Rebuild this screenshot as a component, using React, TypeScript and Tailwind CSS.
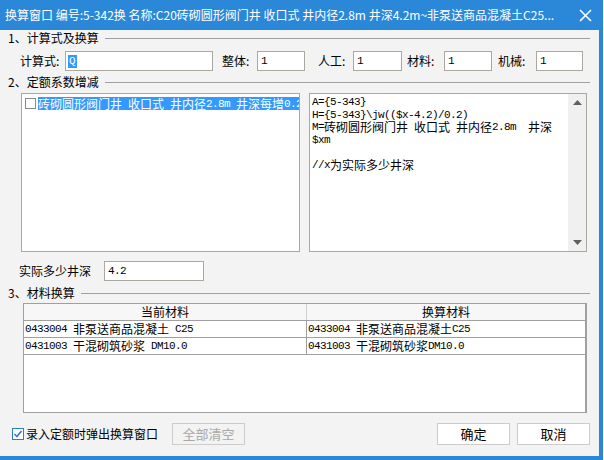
import React from 'react';

// SimSun-like text: ASCII runs in a narrow mono face, CJK at 12px
const Sim = ({ text }: { text: string }) => {
  const parts = text.match(/[\x00-\x7f]+|[^\x00-\x7f]+/g) ?? [];
  return (
    <>
      {parts.map((p, i) =>
        /^[\x00-\x7f]/.test(p) ? (
          <span key={i} className="font-['Liberation_Mono'] text-[11px] tracking-[-0.6px] leading-[12px] whitespace-pre">{p}</span>
        ) : (
          <span key={i} className="leading-[12px] whitespace-pre">{p}</span>
        )
      )}
    </>
  );
};

const SectionHeader = ({ label }: { label: string }) => (
  <div className="flex items-center h-[14px] pl-[8px] pr-[9px]">
    <span className="leading-[14px]">{label}</span>
    <div className="flex-1 ml-[6px] border-t border-[#a0a0a0]" />
  </div>
);

const Field = ({ value, width }: { value: string; width: string }) => (
  <div className={`${width} h-[20px] bg-white border border-[#aaa89f] flex items-center pl-[3px] text-[12px]`}>
    <Sim text={value} />
  </div>
);

const codeLines = [
  'A={5-343}',
  'H={5-343}\\jw(($x-4.2)/0.2)',
  'M=砖砌圆形阀门井 收口式 井内径2.8m  井深',
  '$xm',
  '',
  '//x为实际多少井深',
];

const materials = [
  { cur: '0433004 非泵送商品混凝土 C25', next: '0433004 非泵送商品混凝土C25' },
  { cur: '0431003 干混砌筑砂浆 DM10.0', next: '0431003 干混砌筑砂浆DM10.0' },
];

export default function App() {
  return (
    <div className="w-[604px] h-[460px] bg-white overflow-hidden font-['Noto_Sans_CJK_SC',sans-serif] text-[12px] text-black">
      <div className="w-[603px] h-[460px] flex flex-col bg-[#f3f3f3] border-r-4 border-b-4 border-[#2b88d8]">
        {/* title bar */}
        <div className="h-[30px] shrink-0 bg-[#2b88d8] text-white flex items-center pl-[5px] pr-[4px]">
          <span className="flex-1 whitespace-nowrap overflow-hidden leading-[16px]">
            换算窗口 编号:5-342换 名称:C20砖砌圆形阀门井 收口式 井内径2.8m 井深4.2m~非泵送商品混凝土C25...
          </span>
          <svg width="13" height="13" viewBox="0 0 13 13" className="mr-[3px]">
            <path d="M1 1L12 12M12 1L1 12" stroke="white" strokeWidth="1.6" />
          </svg>
        </div>

        {/* 1 */}
        <div className="mt-[1px]">
          <SectionHeader label="1、计算式及换算" />
        </div>
        <div className="mt-[6px] flex items-center pl-[20px]">
          <span className="w-[45px]">计算式:</span>
          <div className="w-[148px] h-[20px] bg-white border border-[#aaa89f] flex items-center pl-[2px]">
            <span className="bg-[#3399ff] text-white font-['Liberation_Mono'] text-[11px] leading-[13px] px-[1px]">Q</span>
          </div>
          <span className="ml-[9px] w-[35px]">整体:</span>
          <Field value="1" width="w-[48px]" />
          <span className="ml-[13px] w-[35px]">人工:</span>
          <Field value="1" width="w-[49px]" />
          <span className="ml-[5px] w-[37px]">材料:</span>
          <Field value="1" width="w-[48px]" />
          <span className="ml-[6px] w-[38px]">机械:</span>
          <Field value="1" width="w-[47px]" />
        </div>

        {/* 2 */}
        <div className="mt-[4px]">
          <SectionHeader label="2、定额系数增减" />
        </div>
        <div className="mt-[4px] flex pl-[21px] gap-[9px] h-[159px]">
          <div className="w-[279px] bg-white border border-[#aaa89f] pt-[3px] pl-[3px] overflow-hidden">
            <div className="flex items-center h-[13px]">
              <div className="w-[11px] h-[11px] border border-[#8a8a8a] bg-white shrink-0" />
              <div className="ml-[2px] bg-[#3399ff] text-white h-[13px] flex items-center flex-1 overflow-hidden">
                <Sim text="砖砌圆形阀门井 收口式 井内径2.8m 井深每增0.2" />
              </div>
            </div>
          </div>
          <div className="w-[278px] bg-white border border-[#aaa89f] flex">
            <div className="flex-1 pl-[2px] pt-[2px] overflow-hidden">
              {codeLines.map((l, i) => (
                <div key={i} className="h-[12.5px] flex items-center">
                  <Sim text={l} />
                </div>
              ))}
            </div>
            <div className="w-[18px] bg-[#f0f0f0] flex flex-col justify-between items-center py-[6px]">
              <svg width="9" height="5" viewBox="0 0 9 5">
                <path d="M0 5L4.5 0L9 5Z" fill="#606060" />
              </svg>
              <svg width="9" height="5" viewBox="0 0 9 5">
                <path d="M0 0L4.5 5L9 0Z" fill="#606060" />
              </svg>
            </div>
          </div>
        </div>

        <div className="mt-[9px] flex items-center pl-[19px]">
          <span className="w-[85px]">实际多少井深</span>
          <Field value="4.2" width="w-[100px]" />
        </div>

        {/* 3 */}
        <div className="mt-[5px]">
          <SectionHeader label="3、材料换算" />
        </div>
        <div className="mt-[3px] ml-[23px] w-[564px] h-[110px] bg-white border border-[#a0a0a0] border-r-2 flex flex-col">
          <div className="grid grid-cols-[283px_1fr] h-[17px] bg-[#f7f7f7] border-b border-[#a0a0a0]">
            <div className="text-center leading-[16px] border-r border-[#d0d0d0]">当前材料</div>
            <div className="text-center leading-[16px]">换算材料</div>
          </div>
          {materials.map((m) => (
            <div key={m.cur} className="grid grid-cols-[283px_1fr] h-[17px] border-b border-[#a0a0a0]">
              <div className="pl-[1px] border-r border-[#a0a0a0] flex items-center">
                <Sim text={m.cur} />
              </div>
              <div className="pl-[1px] flex items-center">
                <Sim text={m.next} />
              </div>
            </div>
          ))}
        </div>

        {/* bottom */}
        <div className="mt-[10px] flex items-center pl-[12px] pr-[9px]">
          <div className="w-[12px] h-[12px] border border-[#2a7fd4] bg-white flex items-center justify-center">
            <svg width="10" height="10" viewBox="0 0 10 10">
              <path d="M1.5 5L4 7.5L8.5 2" stroke="#2a7fd4" strokeWidth="1.6" fill="none" />
            </svg>
          </div>
          <span className="ml-[2px] text-[12px]">录入定额时弹出换算窗口</span>
          <button className="ml-[14px] w-[73px] h-[22px] border border-[#cccccc] bg-[#f3f3f3] text-[#a8a8a8] text-[13px]">全部清空</button>
          <div className="flex-1" />
          <button className="w-[73px] h-[22px] border border-[#cccccc] bg-white text-[13px]">确定</button>
          <button className="ml-[7px] w-[73px] h-[22px] border border-[#cccccc] bg-white text-[13px]">取消</button>
        </div>
      </div>
    </div>
  );
}
